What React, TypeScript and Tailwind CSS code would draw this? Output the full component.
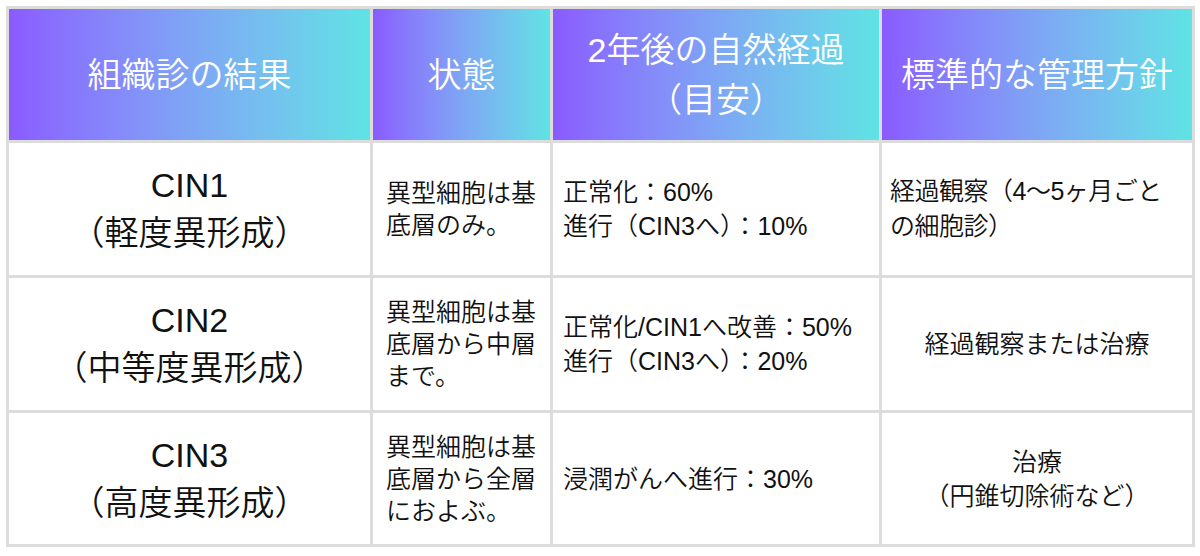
const font = "font-['Liberation_Sans','Noto_Sans_CJK_JP',sans-serif]";

const headers = [
  ["組織診の結果"],
  ["状態"],
  ["2年後の自然経過", "（目安）"],
  ["標準的な管理方針"],
];

type Row = {
  grade: string;
  label: string;
  state: string;
  course: string[];
  plan: string[];
  planAlign: "left" | "center";
};

const rows: Row[] = [
  {
    grade: "CIN1",
    label: "（軽度異形成）",
    state: "異型細胞は基底層のみ。",
    course: ["正常化：60%", "進行（CIN3へ）：10%"],
    plan: ["経過観察（4〜5ヶ月ごと", "の細胞診）"],
    planAlign: "left",
  },
  {
    grade: "CIN2",
    label: "（中等度異形成）",
    state: "異型細胞は基底層から中層まで。",
    course: ["正常化/CIN1へ改善：50%", "進行（CIN3へ）：20%"],
    plan: ["経過観察または治療"],
    planAlign: "center",
  },
  {
    grade: "CIN3",
    label: "（高度異形成）",
    state: "異型細胞は基底層から全層におよぶ。",
    course: ["浸潤がんへ進行：30%"],
    plan: ["治療", "（円錐切除術など）"],
    planAlign: "center",
  },
];

export default function App() {
  return (
    <div className={`w-[1200px] h-[556px] bg-white pt-[6px] pl-[6px] font-[350] ${font}`}>
      <div className="w-[1189px] grid grid-cols-[361px_177px_326px_310px] grid-rows-[131px_132px_132px_131px] gap-[3px] p-[3px] bg-[#dcdcdc]">
        {headers.map((lines, i) => (
          <div
            key={i}
            className="flex flex-col items-center justify-center bg-linear-to-r from-[#8a5aff] to-[#5ee3e4] text-white text-[34px] leading-[50px]"
          >
            {lines.map((l) => (
              <span key={l}>{l}</span>
            ))}
          </div>
        ))}

        {rows.map((r) => (
          <>
            <div
              key={r.grade + "a"}
              className="flex flex-col items-center justify-center bg-white text-[#111] text-[34px] leading-[48px]"
            >
              <span>{r.grade}</span>
              <span>{r.label}</span>
            </div>
            <div
              key={r.grade + "b"}
              className="flex items-center bg-white pl-[13px] pr-[8px] text-[#111] text-[25px] leading-[32px]"
            >
              <p>{r.state}</p>
            </div>
            <div
              key={r.grade + "c"}
              className="flex flex-col justify-center bg-white pl-[10px] text-[#111] text-[25px] leading-[34px]"
            >
              {r.course.map((l) => (
                <span key={l} className="whitespace-nowrap">
                  {l}
                </span>
              ))}
            </div>
            <div
              key={r.grade + "d"}
              className={
                r.planAlign === "left"
                  ? "flex flex-col justify-center items-start bg-white pl-[8px] text-[#111] text-[25px] leading-[35px] tracking-[-0.5px]"
                  : "flex flex-col justify-center items-center bg-white text-[#111] text-[25px] leading-[34px]"
              }
            >
              {r.plan.map((l) => (
                <span key={l} className="whitespace-nowrap">
                  {l}
                </span>
              ))}
            </div>
          </>
        ))}
      </div>
    </div>
  );
}
